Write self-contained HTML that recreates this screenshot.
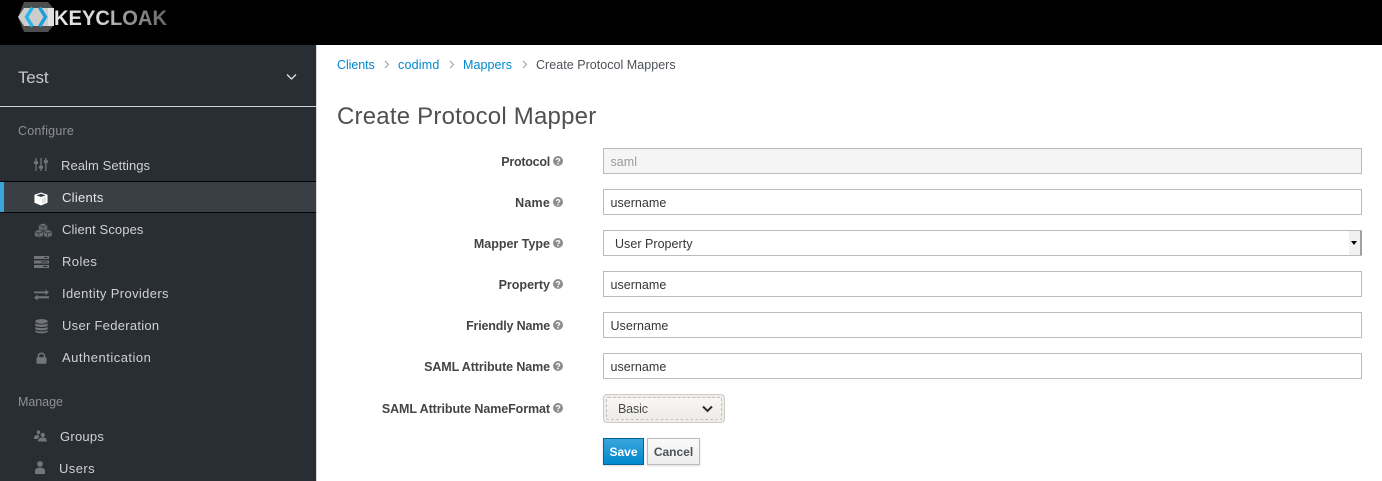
<!DOCTYPE html>
<html lang="en">
<head>
<meta charset="utf-8">
<title>Create Protocol Mapper</title>
<style>
html,body{margin:0;padding:0;background:#fff}
body{position:relative;width:1382px;height:481px;overflow:hidden;font-family:"Liberation Sans",sans-serif;font-size:13px;color:#363636}
.a{position:absolute}
.t{position:absolute;white-space:nowrap;line-height:20px;height:20px;margin-top:1px}
.nav{color:#d1d1d1;font-size:13px;letter-spacing:.42px}
.sec{color:#8e9093;font-size:12.5px;letter-spacing:.2px}
.bc{color:#0088ce;font-size:12.5px;letter-spacing:.2px}
.lab{font-weight:bold;font-size:12.5px;color:#444;right:832px;text-align:right}
.inp{position:absolute;left:603px;width:757px;height:24px;border:1px solid #bbb;background:#fff;line-height:26px;font-size:12.5px;padding:0;color:#363636;text-indent:6.5px;letter-spacing:.03px}
svg{position:absolute;display:block}
</style>
</head>
<body>
<div class="a" style="left:0;top:0;width:1382px;height:45px;background:#000"></div>

<!-- logo -->
<svg style="left:17px;top:0" width="155" height="34" viewBox="0 0 155 34">
<defs><linearGradient id="lg" x1="0" x2="1" y1="0" y2="0"><stop offset="0" stop-color="#e8e8e8"/><stop offset=".42" stop-color="#d6d6d6"/><stop offset=".58" stop-color="#a0a0a0"/><stop offset="1" stop-color="#686868"/></linearGradient></defs>
<polygon points="7,2 31,2 37,9 37,25 31,32 7,32 1,17" fill="#4e4e4e"/>
<polygon points="1,17 7,8 37,8 37,26 7,26" fill="#cdcdcd"/>
<polygon points="37,8 37,26 31,26 31,8" fill="#e2e2e2"/>
<path d="M15.5 7.5 L9.5 17 L15.5 26.5" fill="none" stroke="#26b6e8" stroke-width="3.4"/>
<path d="M22.5 7.5 L28.5 17 L22.5 26.5" fill="none" stroke="#1b9fd8" stroke-width="3.4"/>
<text x="37" y="25" font-family="Liberation Sans,sans-serif" font-weight="bold" font-size="21" fill="url(#lg)" textLength="113" lengthAdjust="spacingAndGlyphs">KEYCLOAK</text>
</svg>

<!-- sidebar -->
<div class="a" style="left:0;top:45px;width:316px;height:436px;background:#292e34"></div>
<div class="a" style="left:316px;top:45px;width:1px;height:436px;background:#d8d8d8"></div>
<div class="a" style="left:0;top:106px;width:316px;height:1px;background:#d1d1d1"></div>
<div class="t" style="left:18px;top:67px;color:#c8c8c8;font-size:17px;letter-spacing:-.2px">Test</div>
<svg style="left:286px;top:73px" width="11" height="8" viewBox="0 0 11 8"><path d="M1 1.5 L5.5 6 L10 1.5" fill="none" stroke="#e4e4e4" stroke-width="1.3"/></svg>

<div class="t sec" style="left:18px;top:120px">Configure</div>

<div class="a" style="left:0;top:181px;width:316px;height:30px;background:#393f44;border-top:1px solid #030303;border-bottom:1px solid #030303"></div>
<div class="a" style="left:0;top:182px;width:4px;height:30px;background:#39a5dc"></div>

<svg style="left:34px;top:157px" width="14" height="15" viewBox="0 0 15 15" fill="#72767b">
<rect x="1.5" y="0.5" width="1.4" height="14"/><rect x="6.8" y="0.5" width="1.4" height="14"/><rect x="12" y="0.5" width="1.4" height="14"/>
<rect x="0" y="4" width="4.4" height="3" rx=".6"/><rect x="5.3" y="9" width="4.4" height="3" rx=".6"/><rect x="10.5" y="3" width="4.4" height="3" rx=".6"/>
</svg>
<div class="t nav" style="left:61px;top:155px;letter-spacing:.07px">Realm Settings</div>

<svg style="left:34px;top:192px" width="14" height="14" viewBox="0 0 15 15">
<path d="M7.5 0.5 L14.5 3 V11.5 L7.5 14.5 L0.5 11.5 V3 Z" fill="#fff"/>
<path d="M2.5 3.6 L7.5 1.9 L12.5 3.6 L7.5 5.4 Z" fill="#393f44"/>
<path d="M8.6 6.6 L13 5 V10.6 L8.6 12.6 Z" fill="#393f44" opacity=".15"/>
</svg>
<div class="t nav" style="left:62px;top:187px;color:#e6e6e6;letter-spacing:.28px">Clients</div>

<svg style="left:34px;top:223px" width="19" height="15" viewBox="0 0 20 16" fill="#676b70">
<path d="M9.5 0.5 L14 2.2 V6.6 L9.5 8.3 L5 6.6 V2.2 Z"/>
<path d="M5 7.2 L9.3 8.9 V13.6 L5 15.4 L0.7 13.6 V8.9 Z"/>
<path d="M14.5 7.2 L18.8 8.9 V13.6 L14.5 15.4 L10.2 13.6 V8.9 Z"/>
<path d="M5.5 2.6 L9.5 4.2 L13.5 2.6 M9.5 4.2 V8 M1.2 9.3 L5 10.9 L8.8 9.3 M5 10.9 V15 M10.7 9.3 L14.5 10.9 L18.3 9.3 M14.5 10.9 V15" fill="none" stroke="#292e34" stroke-width=".7"/>
</svg>
<div class="t nav" style="left:62px;top:219px;letter-spacing:.1px">Client Scopes</div>

<svg style="left:34px;top:256px" width="15" height="12" viewBox="0 0 15 12" fill="#72767b">
<rect x="0" y="0" width="15" height="3"/><rect x="0" y="4.5" width="15" height="3"/><rect x="0" y="9" width="15" height="3"/>
<rect x="10" y="1" width="3.5" height="1" fill="#292e34"/><rect x="7" y="5.5" width="6.5" height="1" fill="#292e34"/><rect x="9" y="10" width="4.5" height="1" fill="#292e34"/>
</svg>
<div class="t nav" style="left:62px;top:251px">Roles</div>

<svg style="left:34px;top:289px" width="15" height="12" viewBox="0 0 15 12" fill="#72767b">
<path d="M0 2.5 H11.5 V0.5 L15 3.5 L11.5 6 V4.2 H0 Z"/>
<path d="M15 7.2 H3.5 V5.8 L0 8.6 L3.5 11.5 V9.4 H15 Z"/>
</svg>
<div class="t nav" style="left:62px;top:283px;letter-spacing:.36px">Identity Providers</div>

<svg style="left:35px;top:319px" width="13" height="15" viewBox="0 0 13 15" fill="#72767b">
<ellipse cx="6.5" cy="2.4" rx="6.2" ry="2.3"/>
<path d="M.3 4.2 C2 6 11 6 12.7 4.2 V6.6 C11 8.4 2 8.4 .3 6.6 Z"/>
<path d="M.3 7.8 C2 9.6 11 9.6 12.7 7.8 V10 C11 11.8 2 11.8 .3 10 Z"/>
<path d="M.3 11.2 C2 13 11 13 12.7 11.2 V12.6 C11 14.8 2 14.8 .3 12.6 Z"/>
</svg>
<div class="t nav" style="left:62px;top:315px;letter-spacing:.28px">User Federation</div>

<svg style="left:36px;top:352px" width="11" height="12" viewBox="0 0 11 12">
<path d="M2.6 6 V3.6 C2.6 .6 8.4 .6 8.4 3.6 V6" fill="none" stroke="#72767b" stroke-width="1.5"/>
<rect x=".5" y="5.2" width="10" height="6.6" rx=".8" fill="#72767b"/>
</svg>
<div class="t nav" style="left:62px;top:347px;letter-spacing:.5px">Authentication</div>

<div class="t sec" style="left:18px;top:391px;letter-spacing:-.05px">Manage</div>

<svg style="left:34px;top:430px" width="13" height="12" viewBox="0 0 13 12" fill="#72767b">
<circle cx="4.5" cy="2.2" r="1.8"/><circle cx="8.8" cy="5" r="2.1"/>
<path d="M0 8 C0 5.8 2 4.8 4.5 4.8 L5.2 7 L3.5 9 H0 Z"/>
<path d="M4 11.5 C4 8.5 6 7.5 8.8 7.5 C11.5 7.5 12.8 8.6 12.8 11.5 Z"/>
</svg>
<div class="t nav" style="left:60px;top:426px;letter-spacing:.25px">Groups</div>

<svg style="left:34px;top:461px" width="12" height="13" viewBox="0 0 12 13" fill="#72767b">
<circle cx="6" cy="3" r="2.9"/>
<path d="M1 13 V9.8 C1 7.8 3 6.6 6 6.6 C9 6.6 11 7.8 11 9.8 V13 Z"/>
</svg>
<div class="t nav" style="left:59px;top:458px">Users</div>

<!-- breadcrumb -->
<div class="t bc" style="left:337px;top:54px;letter-spacing:-.08px">Clients</div>
<svg style="left:384px;top:60px" width="6" height="9" viewBox="0 0 6 9"><path d="M1 1 L4.5 4.5 L1 8" fill="none" stroke="#9c9c9c"/></svg>
<div class="t bc" style="left:398px;top:54px">codimd</div>
<svg style="left:449px;top:60px" width="6" height="9" viewBox="0 0 6 9"><path d="M1 1 L4.5 4.5 L1 8" fill="none" stroke="#9c9c9c"/></svg>
<div class="t bc" style="left:463px;top:54px;letter-spacing:.06px">Mappers</div>
<svg style="left:522px;top:60px" width="6" height="9" viewBox="0 0 6 9"><path d="M1 1 L4.5 4.5 L1 8" fill="none" stroke="#9c9c9c"/></svg>
<div class="t bc" style="left:536px;top:54px;color:#4d5258;letter-spacing:.03px">Create Protocol Mappers</div>

<div class="t" style="left:337px;top:103px;height:26px;line-height:26px;font-size:24px;color:#505050;letter-spacing:.21px">Create Protocol Mapper</div>

<!-- form -->
<div class="t lab" style="top:151px;letter-spacing:-.25px">Protocol</div>
<div class="inp" style="top:148px;background:#f5f5f5;color:#9c9c9c">saml</div>

<div class="t lab" style="top:192px;letter-spacing:.2px">Name</div>
<div class="inp" style="top:189px">username</div>

<div class="t lab" style="top:233px">Mapper Type</div>
<div class="inp" style="top:230px;text-indent:11px">User Property</div>
<div class="a" style="left:1349px;top:231px;width:11px;height:24px;background:#f1f1f1;border-right:2px solid #a0a0a0"></div>
<div class="a" style="left:1351px;top:241px;width:0;height:0;border-left:3.5px solid transparent;border-right:3.5px solid transparent;border-top:4px solid #000"></div>

<div class="t lab" style="top:274px">Property</div>
<div class="inp" style="top:271px">username</div>

<div class="t lab" style="top:315px;letter-spacing:-.17px">Friendly Name</div>
<div class="inp" style="top:312px">Username</div>

<div class="t lab" style="top:356px;letter-spacing:-.1px">SAML Attribute Name</div>
<div class="inp" style="top:353px">username</div>

<div class="t lab" style="top:398px;letter-spacing:-.08px">SAML Attribute NameFormat</div>

<!-- help icons -->
<svg width="0" height="0" style="left:0;top:0"><defs><g id="h"><circle cx="5" cy="5" r="5" fill="#8b8d8f"/><path d="M3.4 4 C3.4 2.2 6.7 2.2 6.7 4 C6.7 5.2 5 5 5 6.2" fill="none" stroke="#fff" stroke-width="1.2"/><rect x="4.3" y="7" width="1.4" height="1.4" fill="#fff"/></g></defs></svg>
<svg style="left:553px;top:156px" width="10" height="10"><use href="#h"/></svg>
<svg style="left:553px;top:197px" width="10" height="10"><use href="#h"/></svg>
<svg style="left:553px;top:238px" width="10" height="10"><use href="#h"/></svg>
<svg style="left:553px;top:279px" width="10" height="10"><use href="#h"/></svg>
<svg style="left:553px;top:320px" width="10" height="10"><use href="#h"/></svg>
<svg style="left:553px;top:361px" width="10" height="10"><use href="#h"/></svg>
<svg style="left:553px;top:403px" width="10" height="10"><use href="#h"/></svg>

<!-- Basic select -->
<div class="a" style="left:603px;top:394px;width:120px;height:27px;border:1px solid #cfccc5;border-radius:4px;background:#efedea"></div>
<div class="a" style="left:606px;top:397px;width:114px;height:21px;border:1px dashed #c4c2bd;border-radius:2px;background:linear-gradient(#f8f7f6,#eeecea)"></div>
<div class="t" style="left:618px;top:398px;font-size:12.5px;color:#4a4a4a;letter-spacing:-.15px">Basic</div>
<svg style="left:702px;top:405px" width="11" height="8" viewBox="0 0 11 8"><path d="M1 1.5 L5.5 6 L10 1.5" fill="none" stroke="#2e2e2e" stroke-width="2"/></svg>

<!-- buttons -->
<div class="a" style="left:603px;top:438px;width:39px;height:25px;border:1px solid #00659c;background:linear-gradient(#39a5dc,#0088ce);color:#fff;font-weight:bold;font-size:12px;line-height:27px;text-align:center;box-shadow:0 1px 2px rgba(0,0,0,.15)">Save</div>
<div class="a" style="left:647px;top:438px;width:51px;height:25px;border:1px solid #bbb;background:linear-gradient(#fafafa,#ededed);color:#4d5258;font-weight:bold;font-size:12px;line-height:27px;text-align:center;box-shadow:0 1px 2px rgba(0,0,0,.15)">Cancel</div>
</body>
</html>
